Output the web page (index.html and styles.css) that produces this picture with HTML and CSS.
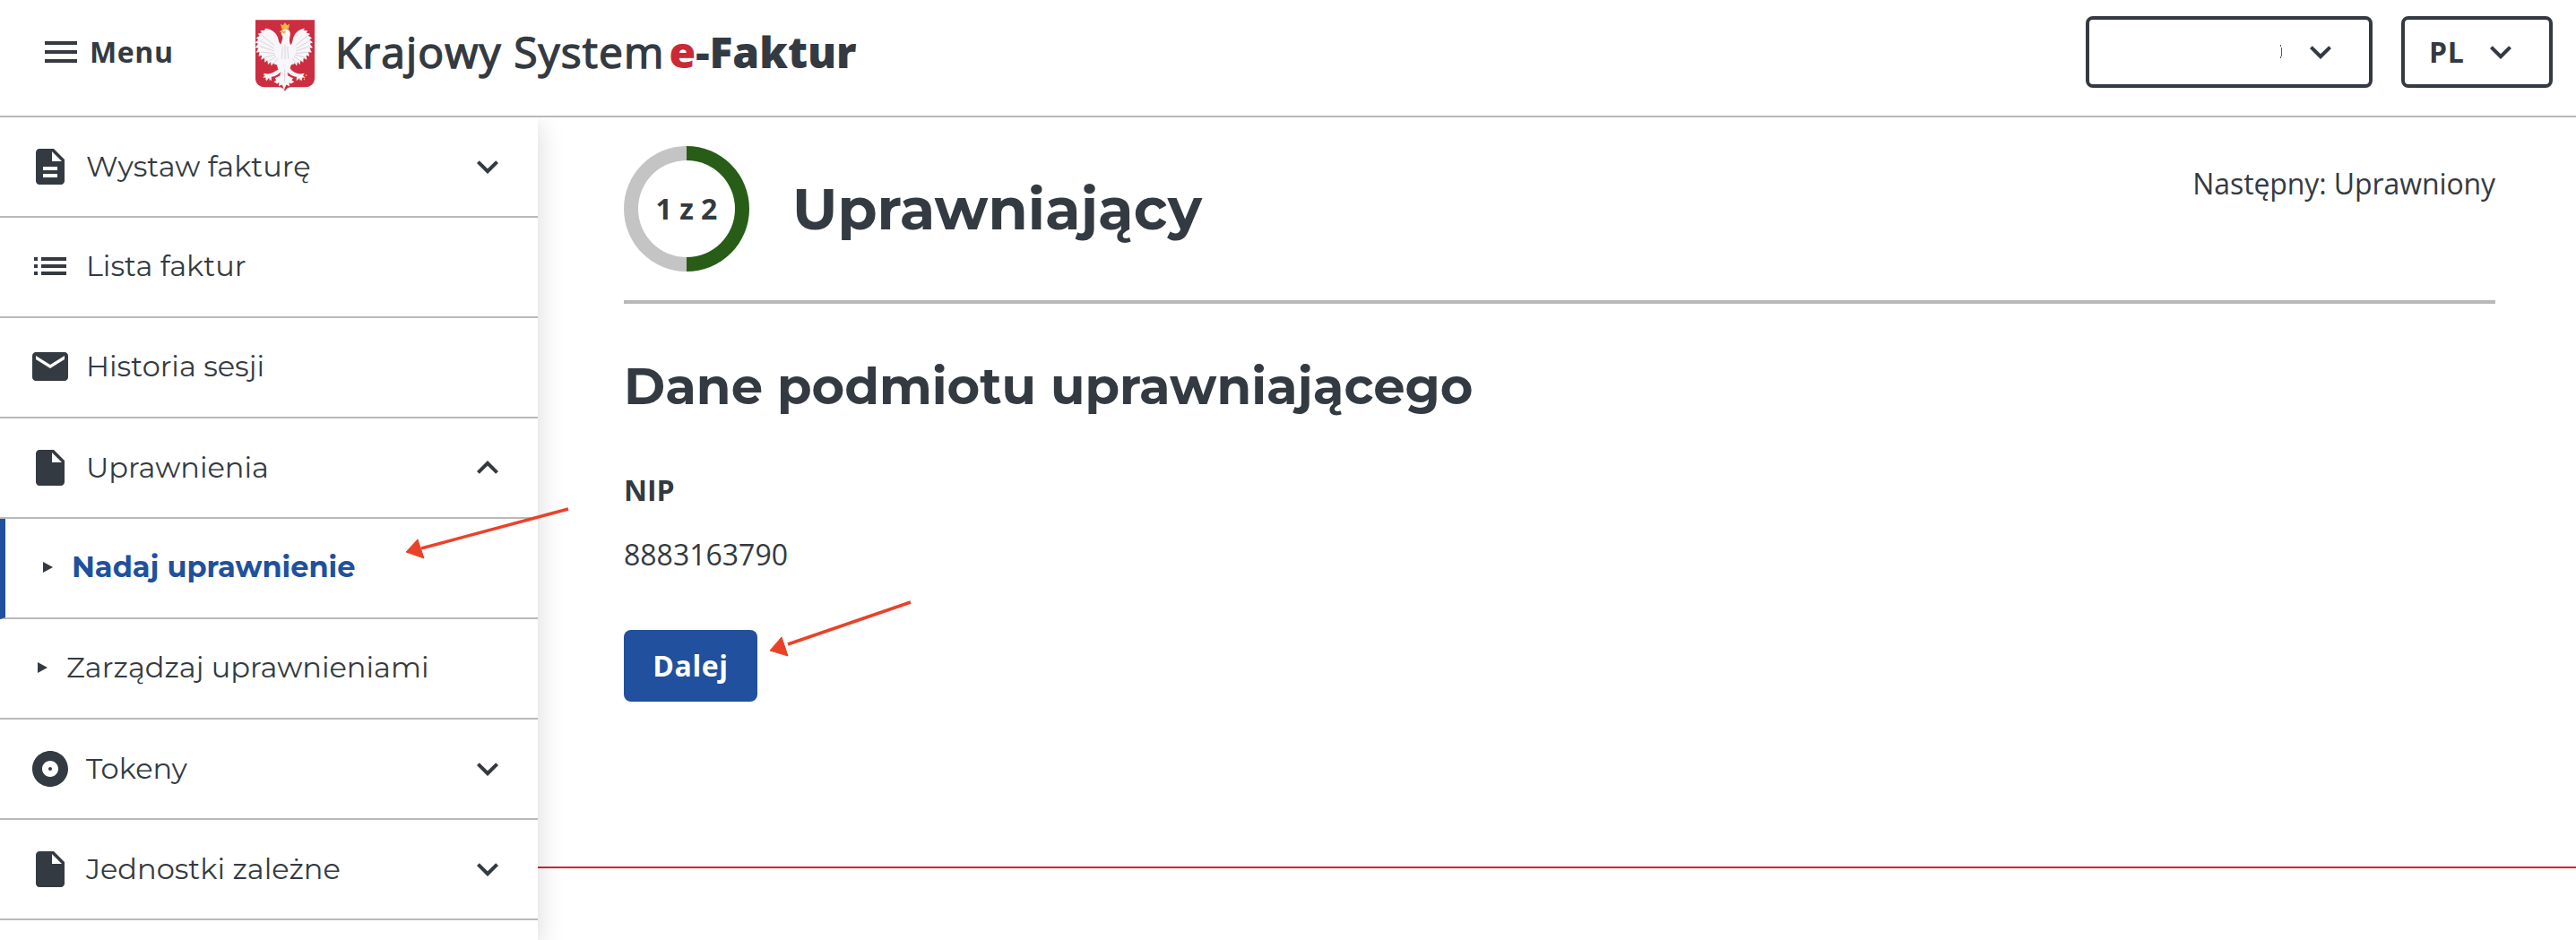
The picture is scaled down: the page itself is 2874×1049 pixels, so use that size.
FILE: index.html
```html
<!DOCTYPE html>
<html lang="pl">
<head>
    <meta charset="UTF-8" />
    <title>Krajowy System e-Faktur</title>
    <link rel="stylesheet" href="styles.css">
</head>
<body>
    <svg class="hidden">
        <symbol id="icon-down" viewBox="0 0 24 24"><path d="M7.41 8.59 12 13.17l4.59-4.58L18 10l-6 6-6-6z"/></symbol>
        <symbol id="icon-up" viewBox="0 0 24 24"><path d="M7.41 15.41 12 10.83l4.59 4.58L18 14l-6-6-6 6z"/></symbol>
        <symbol id="icon-file" viewBox="0 0 24 24"><path d="M6 2c-1.1 0-1.99.9-1.99 2L4 20c0 1.1.89 2 1.99 2H18c1.1 0 2-.9 2-2V8l-6-6H6zm7 7V3.5L18.5 9H13z"/></symbol>
    </svg>
    <header class="header">
        <button class="menu-btn">
            <svg class="icon" viewBox="0 0 24 24"><path d="M3 18h18v-2H3v2zm0-5h18v-2H3v2zm0-7v2h18V6H3z"/></svg>
            <span>Menu</span>
        </button>
        <a class="logo" href="#">
            <svg class="emblem" viewBox="0 0 198 239">
                <path fill="#cc2d40" d="M0 0h198v196c0 17-13 29-31 29h-46c-11 0-17 4-22 14-5-10-11-14-22-14H31c-18 0-31-12-31-29z"/>
                <path fill="#f8f6f8" d="M34 29c18 2 32 12 39 25 5 9 3 20 12 28l6-20c1-7-2-10-5-14l2-13c8-7 22-6 27 4 4 10-2 20-1 33l3 12c10-8 6-20 12-30 7-13 19-23 36-25l-4 6 14 1-5 7 13 4-6 6 12 8-8 5 11 10-10 4 10 13-11 2 8 14-12-1 4 14-11-3 2 15-11-6-1 15-9-8-2 15-8-9-3 13-7-10-3 5c-8-2-10 3-12 14 9 11 20 17 35 18l13-2-5 8 8 7-10-1-3 12-7-10-10 9 1-13c-13-1-20-6-31-16l2 12 17 8-5 7 9 5-12 7-5-5 1 13-11-5-7 18-7-18-11 5 1-13-6 5-12-7 9-5-5-7 17-8 2-12c-11 10-18 15-31 16l1 13-10-9-7 10-3-12-10 1 8-7-5-8 13 2c15-1 26-7 35-18-2-11-4-16-12-14l-3-5-7 10-3-13-8 9-2-15-9 8-1-15-11 6 2-15-11 3 4-14-12 1 8-14-11-2 10-13-10-4 11-10-8-5 12-8-6-6 13-4-5-7 14-1z"/>
                <path class="feathers" d="M22 52l42 34M15 69l47 27M14 88l48 16M20 108l43 4M30 126l36-9M44 139l26-17M58 149l18-21M176 52l-42 34M183 69l-47 27M184 88l-48 16M178 108l-43 4M168 126l-36-9M154 139l-26-17M140 149l-18-21M99 82v50M91 90l-3 40M107 90l3 40M98 166v42M84 174l10 10M114 174l-10 10"/>
                <path fill="#cc2d40" d="M66 161l-9 14 21-9zM132 161l9 14-21-9z"/>
                <path fill="#f0b840" d="M84 13l7 5 8-9 7 9 8-5-3 18H88zM90 34c-6 2-9 4-9 8l8-1 5 6 8-3zM29 181l-3 5 6 3zM34 194l-2 8 5-2zM45 195l2 9 4-4zM169 181l4 5-7 3zM164 194l2 8-5-2zM152 195l-3 8-4-4z"/>
                <circle cx="99" cy="38" r="2" fill="#7d6560"/>
            </svg>
            <span class="logo-text">Krajowy System</span>
            <span class="logo-bold"><em>e</em>-Faktur</span>
        </a>
        <div class="header-actions">
            <button class="select-btn select-account">
                <svg class="name-end" viewBox="0 0 4 18"><path d="M.5 1v2M.5 14v2M1.5 4v10"/></svg>
                <svg class="icon"><use href="#icon-down"/></svg>
            </button>
            <button class="select-btn select-lang">
                <span>PL</span>
                <svg class="icon"><use href="#icon-down"/></svg>
            </button>
        </div>
    </header>
    <div class="layout">
        <nav class="sidebar">
            <a class="nav-item" href="#">
                <svg class="icon" viewBox="0 0 24 24"><path d="M14 2H6c-1.1 0-1.99.9-1.99 2L4 20c0 1.1.89 2 1.99 2H18c1.1 0 2-.9 2-2V8l-6-6zm2 16H8v-2h8v2zm0-4H8v-2h8v2zm-3-5V3.5L18.5 9H13z"/></svg>
                <span>Wystaw fakturę</span>
                <svg class="icon arrow"><use href="#icon-down"/></svg>
            </a>
            <a class="nav-item nav-plain" href="#">
                <svg class="icon" viewBox="0 0 24 24"><path d="M3 13h2v-2H3v2zm0 4h2v-2H3v2zm0-8h2V7H3v2zm4 4h14v-2H7v2zm0 4h14v-2H7v2zM7 7v2h14V7H7z"/></svg>
                <span>Lista faktur</span>
            </a>
            <a class="nav-item nav-plain" href="#">
                <svg class="icon" viewBox="0 0 24 24"><path d="M20 4H4c-1.1 0-1.99.9-1.99 2L2 18c0 1.1.9 2 2 2h16c1.1 0 2-.9 2-2V6c0-1.1-.9-2-2-2zm0 4-8 5-8-5V6l8 5 8-5v2z"/></svg>
                <span>Historia sesji</span>
            </a>
            <a class="nav-item" href="#">
                <svg class="icon"><use href="#icon-file"/></svg>
                <span>Uprawnienia</span>
                <svg class="icon arrow"><use href="#icon-up"/></svg>
            </a>
            <a class="nav-item nav-plain nav-sub active" href="#">
                <svg class="caret" viewBox="0 0 11 12"><path d="M0 0l11 6-11 6z"/></svg>
                <span>Nadaj uprawnienie</span>
            </a>
            <a class="nav-item nav-plain nav-sub" href="#">
                <svg class="caret" viewBox="0 0 11 12"><path d="M0 0l11 6-11 6z"/></svg>
                <span>Zarządzaj uprawnieniami</span>
            </a>
            <a class="nav-item" href="#">
                <svg class="icon" viewBox="0 0 24 24"><path d="M12 2C6.48 2 2 6.48 2 12s4.48 10 10 10 10-4.48 10-10S17.52 2 12 2zm0 14.5c-2.49 0-4.5-2.01-4.5-4.5S9.51 7.5 12 7.5s4.5 2.01 4.5 4.5-2.01 4.5-4.5 4.5zm0-5.5c-.55 0-1 .45-1 1s.45 1 1 1 1-.45 1-1-.45-1-1-1z"/></svg>
                <span>Tokeny</span>
                <svg class="icon arrow"><use href="#icon-down"/></svg>
            </a>
            <a class="nav-item" href="#">
                <svg class="icon"><use href="#icon-file"/></svg>
                <span>Jednostki zależne</span>
                <svg class="icon arrow"><use href="#icon-down"/></svg>
            </a>
        </nav>
        <div class="page">
            <main class="content">
                <div class="step">
                    <div class="ring"><div class="ring-inner">1 z 2</div></div>
                    <h1>Uprawniający</h1>
                    <div class="next">Następny: Uprawniony</div>
                </div>
                <h2>Dane podmiotu uprawniającego</h2>
                <div class="label">NIP</div>
                <div class="value">8883163790</div>
                <button class="btn">Dalej</button>
            </main>
            <footer class="footer"></footer>
        </div>
    </div>
    <svg class="pointer pointer-menu" viewBox="0 0 190 64"><path d="M186 8L22 52"/><polygon points="5,56 18,42 25,63"/></svg>
    <svg class="pointer pointer-btn" viewBox="0 0 170 70"><path d="M163 7L26 54"/><polygon points="6,61 19,46 26,67"/></svg>
</body>
</html>
```
FILE: styles.css
```css
* {
    box-sizing: border-box;
}
body {
    margin: 0;
    height: 1049px;
    overflow: hidden;
    position: relative;
    background: #fff;
    color: #343a41;
    font-family: "Open Sans", sans-serif;
    font-size: 32px;
}
button {
    font: inherit;
    font-weight: 700;
    letter-spacing: 0.6px;
    color: inherit;
    background: none;
    border: none;
    padding: 0;
    cursor: pointer;
}
a {
    color: inherit;
    text-decoration: none;
}
.hidden {
    display: none;
}
.icon {
    width: 48px;
    height: 48px;
    fill: #343a41;
    flex: none;
}

/* header */
.header {
    height: 131px;
    padding: 18px 26px 0 44px;
    border-bottom: 2px solid #b9b9b9;
    display: flex;
    align-items: flex-start;
}
.menu-btn {
    height: 80px;
    width: 241px;
    display: flex;
    align-items: center;
    gap: 8px;
}
.menu-btn span, .select-btn span {
    padding-bottom: 2px;
}
.logo {
    display: flex;
    height: 80px;
    align-items: center;
    font-size: 48px;
}
.logo span {
    padding-bottom: 2px;
}
.emblem {
    width: 66px;
    height: 80px;
    margin: 7px 23px 0 0;
}
.feathers {
    fill: none;
    stroke: #c9c3ce;
    stroke-width: 2;
}
.logo-text {
    letter-spacing: 1.1px;
    -webkit-text-stroke: 1.4px #343a41;
}
.logo-bold {
    font-weight: 800;
    margin-left: 5px;
}
.logo-bold em {
    font-style: normal;
    color: #cc2936;
}
.header-actions {
    margin-left: auto;
    display: flex;
    gap: 32px;
}
.select-btn {
    height: 80px;
    border: 4px solid #343a41;
    border-radius: 8px;
    padding: 0 30px;
    display: flex;
    align-items: center;
    justify-content: space-between;
}
.select-account {
    width: 320px;
    justify-content: flex-end;
    gap: 17px;
}
.select-lang {
    width: 169px;
    padding-left: 27px;
}
.name-end {
    width: 4px;
    height: 18px;
    fill: none;
    stroke: #565b62;
}

/* side menu */
.layout {
    display: flex;
    height: 918px;
}
.sidebar {
    width: 600px;
    flex: none;
    box-shadow: 0 8px 28px rgba(0, 0, 0, 0.16);
    clip-path: inset(0 -40px 0 0);
    font-family: "Montserrat", sans-serif;
}
.nav-item {
    height: 112px;
    padding: 0 32px;
    border-bottom: 2px solid #b9b9b9;
    display: flex;
    align-items: center;
    gap: 16px;
}
.nav-item span {
    padding-bottom: 2px;
}
.nav-plain {
    padding-bottom: 2px;
}
.arrow {
    margin-left: auto;
}
.nav-sub {
    padding-left: 42px;
    gap: 21px;
}
.nav-sub.active {
    border-left: 6px solid #20509e;
    font-weight: 700;
}
.active span {
    color: #20509e;
}
.caret {
    width: 11px;
    height: 12px;
    fill: #343a41;
}

/* content */
.page {
    flex: 1;
}
.content {
    height: 836px;
    padding: 32px 90px 0 96px;
}
.step {
    height: 176px;
    border-bottom: 4px solid #b9b9b9;
    display: flex;
    align-items: flex-start;
}
.ring {
    width: 140px;
    height: 140px;
    padding: 16px;
    border-radius: 50%;
    background: conic-gradient(#275d17 50%, #c4c4c4 0);
}
.ring-inner {
    height: 108px;
    padding-bottom: 2px;
    border-radius: 50%;
    background: #fff;
    display: flex;
    align-items: center;
    justify-content: center;
    font-weight: 700;
}
h1, h2 {
    margin: 0;
    font-family: "Montserrat", sans-serif;
    font-weight: 700;
}
h1 {
    font-size: 64px;
    line-height: 140px;
    margin-left: 48px;
}
.next {
    margin-left: auto;
    margin-top: 20px;
    letter-spacing: -0.1px;
}
h2 {
    font-size: 56px;
    line-height: 68px;
    margin-top: 58px;
}
.label {
    font-weight: 700;
    margin-top: 60px;
}
.value {
    margin-top: 29px;
}
.btn {
    display: block;
    width: 149px;
    height: 80px;
    margin-top: 63px;
    padding-bottom: 2px;
    border-radius: 8px;
    background: #20509e;
    color: #fff;
}
.footer {
    border-top: 2px solid #cc2936;
}

/* red arrows drawn over the page */
.pointer {
    position: absolute;
    fill: #ea4228;
    stroke: #ea4228;
    stroke-width: 3.5;
}
.pointer polygon {
    stroke-width: 1;
}
.pointer-menu {
    left: 448px;
    top: 560px;
    width: 190px;
    height: 64px;
}
.pointer-btn {
    left: 853px;
    top: 665px;
    width: 170px;
    height: 70px;
}
```
